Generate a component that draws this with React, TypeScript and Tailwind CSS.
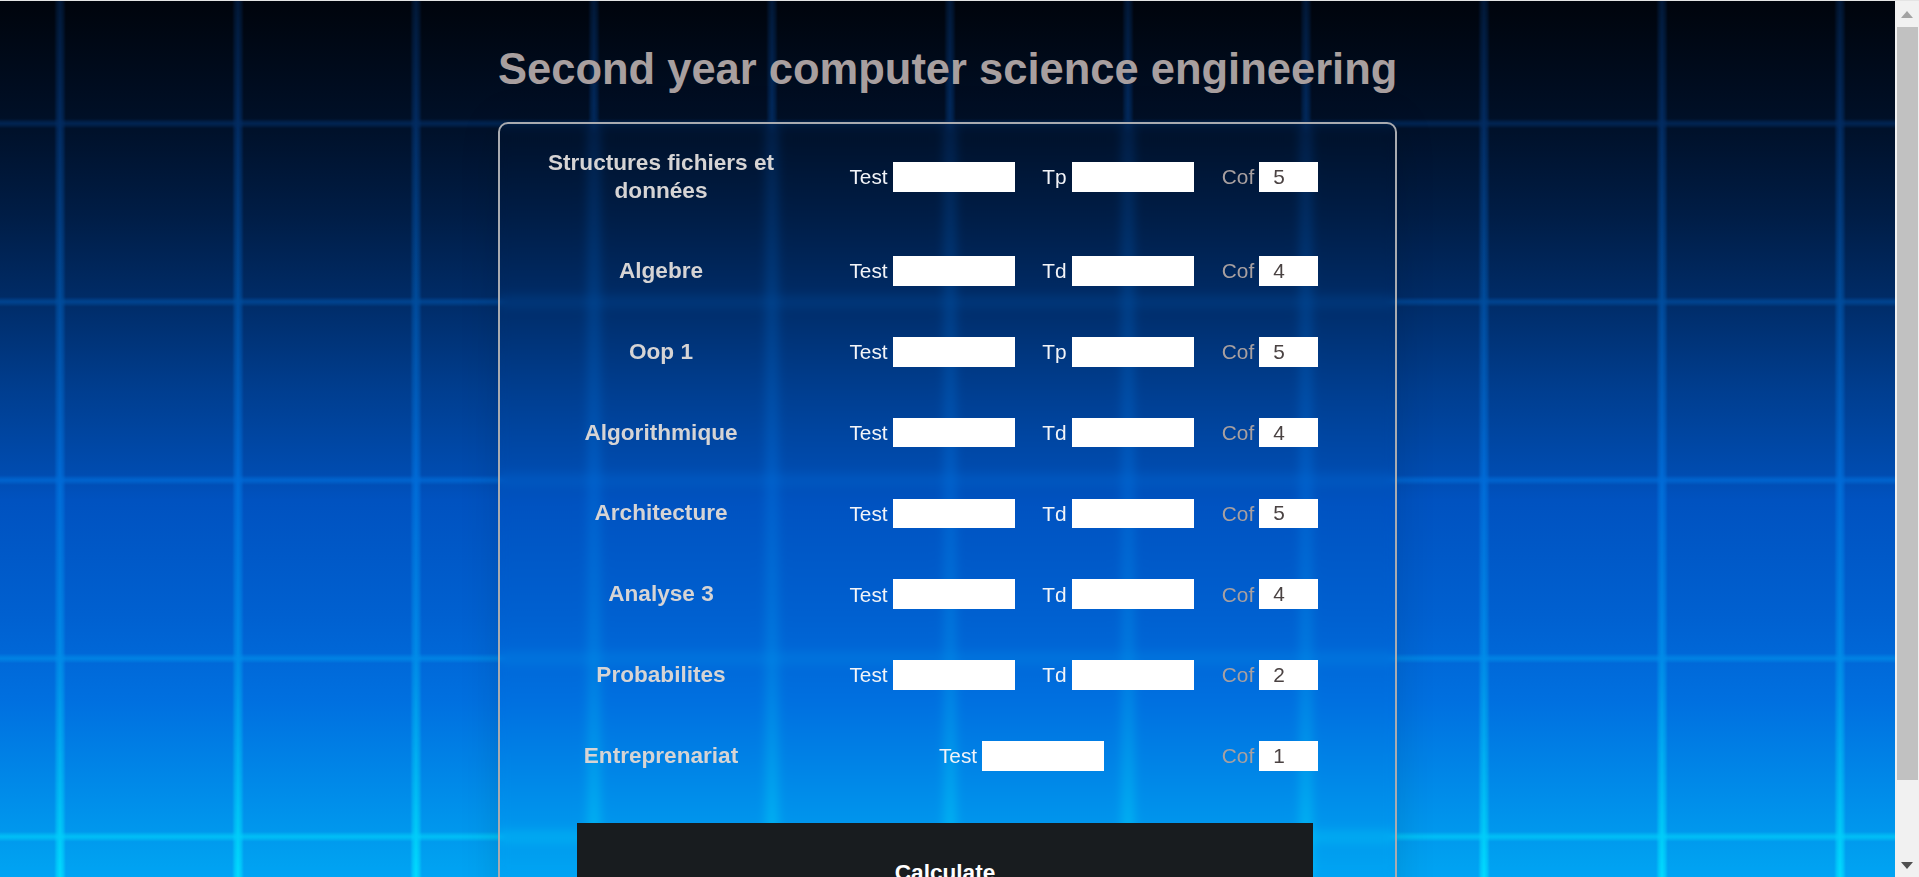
const font = "font-['Liberation_Sans',Arial,sans-serif]";

type Subject = { name: string; second?: string; cof: number };

const subjects: Subject[] = [
  { name: "Structures fichiers et données", second: "Tp", cof: 5 },
  { name: "Algebre", second: "Td", cof: 4 },
  { name: "Oop 1", second: "Tp", cof: 5 },
  { name: "Algorithmique", second: "Td", cof: 4 },
  { name: "Architecture", second: "Td", cof: 5 },
  { name: "Analyse 3", second: "Td", cof: 4 },
  { name: "Probabilites", second: "Td", cof: 2 },
  { name: "Entreprenariat", cof: 1 },
];

function Field({ label }: { label: string }) {
  return (
    <label className="flex items-center gap-[5px] text-[20.8px] text-[#f2f4f8]">
      {label}
      <input type="text" className="w-[122px] h-full bg-white outline-none" />
    </label>
  );
}

function Row({ s }: { s: Subject }) {
  return (
    <div className="flex items-center mb-[51.23px]">
      <div className="w-[258px] mr-[49px] text-center text-[22.6px] leading-[28px] font-bold text-[#d6d4d4]">{s.name}</div>
      {s.second ? (
        <>
          <div className="w-[186px] h-[29.6px] flex justify-center"><Field label="Test" /></div>
          <div className="w-[186px] h-[29.6px] flex justify-center"><Field label={s.second} /></div>
        </>
      ) : (
        <div className="w-[372px] h-[29.6px] flex justify-center pr-[7px]"><Field label="Test" /></div>
      )}
      <div className="w-[118px] h-[29.6px] flex justify-center">
        <label className="flex items-center gap-[5px] text-[20.8px] text-[#a8a0a0]">
          Cof
          <input type="text" readOnly value={s.cof} className="w-[59px] h-full bg-white pl-[14px] text-[#4a4242] outline-none" />
        </label>
      </div>
    </div>
  );
}

function Scrollbar() {
  return (
    <div className="w-[24px] h-full shrink-0 bg-[#f1f1f1] flex flex-col items-center">
      <div className="h-[26px] w-full flex items-center justify-center">
        <svg width="12" height="7" viewBox="0 0 12 7"><path d="M6 0 L12 7 L0 7 Z" fill="#a3a3a3" /></svg>
      </div>
      <div className="h-[753px] w-[21px] ml-[1px] bg-[#c1c1c1]" />
      <div className="flex-1 w-full flex items-end justify-center pb-[8px]">
        <svg width="12" height="7" viewBox="0 0 12 7"><path d="M0 0 L12 0 L6 7 Z" fill="#505050" /></svg>
      </div>
    </div>
  );
}

export default function App() {
  return (
    <div className={`${font} flex h-[877px] overflow-hidden border-t border-[#e4e4e4]`}>
      <main className="relative flex-1 h-full overflow-hidden bg-[linear-gradient(to_bottom,#00040c_0%,#001028_14%,#001d46_24.5%,#002c68_34.4%,#003e90_44.6%,#004cb0_54%,#0052c0_57%,#0060d0_70%,#0070e0_80%,#0088e8_89%,#00a0f0_98%,#00a4f4_100%)]">
        {/* grid lines of the backdrop */}
        <div className="absolute inset-0 bg-[linear-gradient(to_bottom,#021a3a_0%,#022c62_14%,#004c9c_34%,#006cd8_55%,#008ce8_75%,#00ccf8_95%,#00dcff_100%)] [mask-image:linear-gradient(to_right,transparent_54px,rgba(0,0,0,0.65)_57px,black_60px,rgba(0,0,0,0.65)_63px,transparent_66px),linear-gradient(to_bottom,transparent_117.5px,rgba(0,0,0,0.5)_120.5px,rgba(0,0,0,0.75)_122.5px,rgba(0,0,0,0.5)_124.5px,transparent_127.5px)] [mask-size:178px_100%,100%_178.3px]" />

        <div className="relative w-[899px] mx-auto">
          <h1 className="pt-[44px] text-center text-[43.5px] leading-[48px] font-bold text-[#a89f9f] whitespace-nowrap">
            Second year computer science engineering
          </h1>
          <form className="mt-[29px] border-2 border-[#a9abb0] rounded-[10px] pt-[25px] pl-[32px] backdrop-blur-[6px] shadow-[0_0_40px_rgba(0,0,0,0.12)]">
            {subjects.map((s) => (
              <Row key={s.name} s={s} />
            ))}
            <button type="button" className="w-[736px] h-[100px] mt-[1px] ml-[45px] bg-[#181c1f] text-white font-bold text-[22.6px]">
              Calculate
            </button>
          </form>
        </div>
      </main>
      <Scrollbar />
    </div>
  );
}
